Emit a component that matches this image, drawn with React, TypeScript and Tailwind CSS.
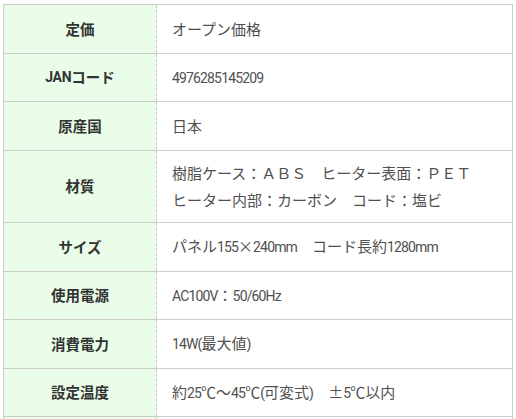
import React from "react";

type Row = { h: string; v: string[] };

const rows: Row[] = [
  { h: "定価", v: ["オープン価格"] },
  { h: "JANコード", v: ["4976285145209"] },
  { h: "原産国", v: ["日本"] },
  { h: "材質", v: ["樹脂ケース：ＡＢＳ　ヒーター表面：ＰＥＴ", "ヒーター内部：カーボン　コード：塩ビ"] },
  { h: "サイズ", v: ["パネル155×240mm　コード長約1280mm"] },
  { h: "使用電源", v: ["AC100V：50/60Hz"] },
  { h: "消費電力", v: ["14W(最大値)"] },
  { h: "設定温度", v: ["約25℃～45℃(可変式)　±5℃以内"] },
];

function Mixed({ s, bold }: { s: string; bold?: boolean }) {
  const parts = s.split(/([\x21-\x7E]+)/);
  return (
    <>
      {parts.map((p, i) =>
        i % 2 === 1 ? (
          <span
            key={i}
            className={
              bold
                ? "font-['Roboto',sans-serif] text-[14px] font-bold tracking-[-0.3px]"
                : "font-['Roboto',sans-serif] text-[14px] tracking-[-0.85px]"
            }
          >
            {p}
          </span>
        ) : (
          <span key={i}>{p}</span>
        )
      )}
    </>
  );
}

export default function App() {
  return (
    <div className="min-h-screen bg-white px-[3px] pt-[4px] font-['Noto_Sans_CJK_JP',sans-serif]">
      <div className="border-l border-r border-t border-[#cccccc]">
        {rows.map((r, idx) => (
          <div key={idx} className="flex border-b border-[#cccccc]">
            <div className="w-[153px] shrink-0 bg-[#e9fde9] border-r border-dashed border-[#cccccc] flex items-center justify-center min-h-[47.5px] text-[14.5px] font-bold text-[#333333] leading-[24px]">
              <Mixed s={r.h} bold />
            </div>
            <div className="flex-1 flex items-center pl-[15px] py-[8.75px] text-[15px] leading-[27px] text-[#505050]">
              <div>
                {r.v.map((line, j) => (
                  <div key={j} className="whitespace-pre">
                    <Mixed s={line} />
                  </div>
                ))}
              </div>
            </div>
          </div>
        ))}
        <div className="flex">
          <div className="w-[153px] shrink-0 bg-[#e9fde9] border-r border-dashed border-[#cccccc] min-h-[47.5px]" />
          <div className="flex-1 min-h-[47.5px]" />
        </div>
      </div>
    </div>
  );
}
